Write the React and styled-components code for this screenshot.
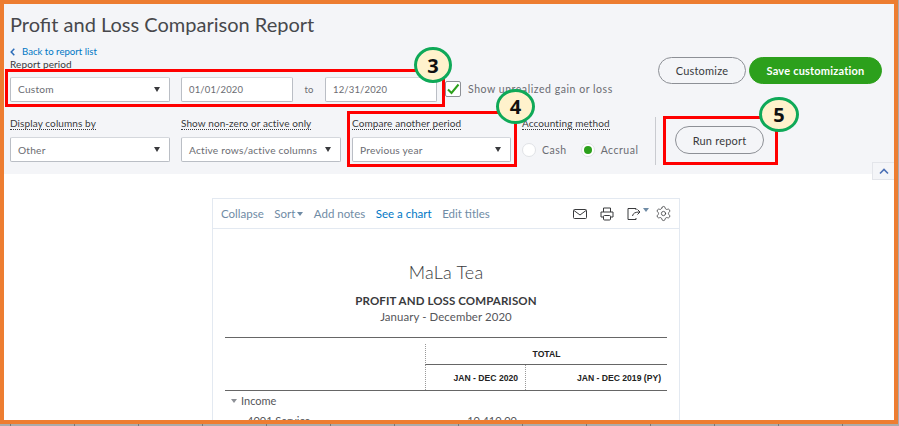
import React from "react";
import styled, { createGlobalStyle } from "styled-components";
import { Settings } from "lucide-react";

const Global = createGlobalStyle`
  html, body { margin: 0; padding: 0; background: #fff; }
  body { font-family: "Lato", "Noto Sans", sans-serif; color: #393a3d; }
  * { box-sizing: border-box; }
`;
const Backdrop = styled.div`
  width: 899px; height: 426px; overflow: hidden; position: relative;
  background: linear-gradient(90deg, #777 0 1px, #ababab 1px 64px) 10px 0 / 64px 100%;
`;
const Frame = styled.div`
  width: 898px; height: 424px; border: 4px solid #ed7d31; background: #fff; overflow: hidden; position: relative;
`;
const Header = styled.div`
  height: 170px; background: #f4f5f8; padding: 5px 0 0 6px; position: relative;
`;
const Title = styled.h1`
  margin: 0; font-size: 20px; line-height: 30px; font-weight: 400; color: #47484c;
`;
const Back = styled.div`
  margin-top: 7px; font-size: 9.6px; line-height: 12px; color: #0077c5; display: flex; align-items: center; gap: 7px;
  svg { display: block; }
`;
const Label = styled.div`
  font-size: 10px; line-height: 12px; letter-spacing: .1px; color: #393a3d; width: fit-content; border-bottom: 1px dotted #393a3d;
`;
const PeriodRow = styled.div`
  display: flex; align-items: center; margin-top: 5px; height: 26px;
`;
const Field = styled.div`
  width: ${p => p.$w}px; height: 25px; background: #fff; border: 1px solid #babec5; border-top-color: #d4d7dc;
  border-radius: 2px; display: flex; align-items: center; justify-content: space-between;
  padding: 0 7px; font-size: ${p => p.$date ? 9.5 : 10.2}px; color: #6b6c72; letter-spacing: ${p => p.$date ? ".15px" : ".2px"};
  margin-right: ${p => p.$mr || 0}px; flex: none; white-space: nowrap;
`;
const Caret = styled.i`
  width: 0; height: 0; border-left: 3.5px solid transparent; border-right: 3.5px solid transparent;
  border-top: 5px solid #393a3d; margin-right: 2px; flex: none;
`;
const To = styled.span`
  font-size: 9.5px; color: #6b6c72; width: 32px; text-align: center; flex: none;
`;
const Check = styled.div`
  display: flex; align-items: center; gap: 7px; font-size: 10.5px; letter-spacing: .55px; color: #6b6c72; margin-left: 8px; white-space: nowrap;
`;
const Box = styled.div`
  width: 16px; height: 16px; background: #fff; border: 1px solid #8d9096; border-radius: 2px;
  display: flex; align-items: center; justify-content: center;
`;
const OptionRow = styled.div`
  display: flex; margin-top: 15px;
`;
const Col = styled.div`
  width: ${p => p.$w}px; flex: none; display: flex; flex-direction: column; gap: 7px;
`;
const Radios = styled.div`
  display: flex; align-items: center; height: 25px; font-size: 10.5px; letter-spacing: .5px; color: #6b6c72; gap: 6px; white-space: nowrap;
`;
const Radio = styled.span`
  width: 14px; height: 14px; border-radius: 50%; background: #fff; border: 1px solid #e0e2e6; flex: none;
  display: flex; align-items: center; justify-content: center; margin-left: ${p => p.$ml || 0}px;
  &::after { content: ""; width: 8px; height: 8px; border-radius: 50%; background: ${p => p.$on ? "#2ca01c" : "transparent"}; }
`;
const Divider = styled.div`
  width: 1px; height: 48px; background: #c9cbd0; margin: 0 19px 0 15px; flex: none;
`;
const Pill = styled.div`
  height: ${p => p.$h}px; width: ${p => p.$w}px; border-radius: 14px; border: 1px solid #8d9096; background: transparent;
  display: flex; align-items: center; justify-content: center; font-size: 11px; letter-spacing: .2px; color: #393a3d; flex: none;
`;
const RunPill = styled(Pill)`
  margin-top: 9px;
`;
const Green = styled(Pill)`
  background: #2ca01c; border-color: #2ca01c; color: #fff; font-weight: 700; font-size: 11px;
`;
const TopActions = styled.div`
  position: absolute; right: 12px; top: 53px; display: flex; gap: 3px;
`;
const Collapse = styled.div`
  position: absolute; right: 0; top: 158px; width: 22px; height: 18px; background: #f4f5f8; border: 1px solid #e3e5ea; border-right: 0;
  display: flex; align-items: center; justify-content: center; z-index: 1;
`;
const Report = styled.div`
  width: 468px; margin: 24px 0 0 208px; border: 1px solid #e3e9f1; border-bottom: 0; height: 260px;
`;
const ReportBar = styled.div`
  height: 30px; border-bottom: 1px solid #e3e9f1; display: flex; align-items: center; padding: 0 7px 0 8px; font-size: 11.5px; color: #6f8ba5; gap: 10.500px;
`;
const BarLink = styled.span`
  color: ${p => p.$blue ? "#0077c5" : "#6f8ba5"}; display: flex; align-items: center; gap: 2px;
`;
const Icons = styled.div`
  margin-left: auto; display: flex; align-items: center; gap: 13px;
  svg { display: block; }
`;
const ShareGroup = styled.div`
  display: flex; align-items: flex-start; gap: 1px; margin-right: -7px;
`;
const SmallCaret = styled.i`
  width: 0; height: 0; border-left: 3.5px solid transparent; border-right: 3.5px solid transparent; border-top: 4px solid ${p => p.$c || "#6f8ba5"}; display: block; margin-top: ${p => p.$mt || 0}px;
`;
const Company = styled.div`
  text-align: center; font-size: 18px; font-weight: 300; color: #393a3d; margin-top: 32px; line-height: 22px; letter-spacing: .2px;
`;
const ReportName = styled.div`
  text-align: center; font-size: 11.5px; font-weight: 700; color: #393a3d; margin-top: 11px; line-height: 14px; letter-spacing: .1px;
`;
const Dates = styled.div`
  text-align: center; font-size: 11.4px; color: #55565a; line-height: 14px; margin-top: 2px; letter-spacing: .1px;
`;
const Table = styled.div`
  margin: 13px 12px 0 12px; border-top: 1px solid #666;
`;
const HeadGrid = styled.div`
  display: grid; grid-template-columns: 200px 100px 142px; grid-template-rows: 27px 25px; border-bottom: 1px solid #666;
`;
const TotalCell = styled.div`
  grid-column: 2 / 4; margin-top: 6px; border-left: 1px dotted #999; border-bottom: 1px solid #666;
  display: flex; align-items: center; justify-content: center; font-family: "Liberation Sans", Arial, sans-serif; font-size: 8.6px; font-weight: 700; color: #222;
`;
const Spacer = styled.div``;
const ColHead = styled.div`
  border-left: 1px dotted #999; display: flex; align-items: center; justify-content: flex-end; padding-right: ${p => p.$pr}px;
  font-family: "Liberation Sans", Arial, sans-serif; font-size: 8.6px; font-weight: 700; color: #222; white-space: nowrap;
`;
const Row = styled.div`
  display: grid; grid-template-columns: 200px 100px 142px; height: ${p => p.$h}px; align-items: center; font-size: 11px; color: #55565a; white-space: nowrap;
`;
const RowName = styled.div`
  display: flex; align-items: center; gap: 4px; padding-left: ${p => p.$pl}px;
`;
const Amount = styled.div`
  text-align: right; padding-right: 8px;
`;
const Overlay = styled.div`
  position: absolute; left: ${p => p.$x}px; top: ${p => p.$y}px; width: ${p => p.$w}px; height: ${p => p.$h}px;
  border: 3px solid #f00; pointer-events: none; z-index: 2;
`;
const Badge = styled.div`
  position: absolute; left: ${p => p.$x}px; top: ${p => p.$y}px; width: ${p => p.$w}px; height: ${p => p.$h}px; border-radius: 50%;
  background: #fff2cc; border: 3px solid #0fa958; display: flex; align-items: center; justify-content: center;
  font-family: "Open Sans", sans-serif; font-size: 20px; font-weight: 700; color: #111; z-index: 3;
`;

export default function App() {
  return (
    <Backdrop>
      <Global />
      <Frame>
        <Header>
          <Title>Profit and Loss Comparison Report</Title>
          <Back>
            <svg width="5" height="8" viewBox="0 0 5 8"><path d="M4.3.8 1.2 4l3.1 3.2" fill="none" stroke="#2b6cb8" strokeWidth="1.5" /></svg>
            Back to report list
          </Back>
          <Label>Report period</Label>
          <PeriodRow>
            <Field $w={160} $mr={11}>Custom<Caret /></Field>
            <Field $w={112} $date>01/01/2020</Field>
            <To>to</To>
            <Field $w={112} $date>12/31/2020</Field>
            <Check>
              <Box>
                <svg width="14" height="12" viewBox="0 0 14 12"><path d="M2 6.5 5.5 10 12.5 1.5" fill="none" stroke="#2ca01c" strokeWidth="2" /></svg>
              </Box>
              Show unrealized gain or loss
            </Check>
          </PeriodRow>
          <OptionRow>
            <Col $w={171}><Label>Display columns by</Label><Field $w={160}>Other<Caret /></Field></Col>
            <Col $w={171}><Label>Show non-zero or active only</Label><Field $w={160}>Active rows/active columns<Caret /></Field></Col>
            <Col $w={170}><Label>Compare another period</Label><Field $w={159}>Previous year<Caret /></Field></Col>
            <Col $w={118}>
              <Label>Accounting method</Label>
              <Radios><Radio />Cash<Radio $on $ml={8} />Accrual</Radios>
            </Col>
            <Divider />
            <RunPill $w={89} $h={28}>Run report</RunPill>
          </OptionRow>
          <TopActions>
            <Pill $w={88} $h={27}>Customize</Pill>
            <Green $w={133} $h={27}>Save customization</Green>
          </TopActions>
        </Header>
        <Collapse>
          <svg width="10" height="7" viewBox="0 0 10 7"><path d="M1 5.5 5 1.5l4 4" fill="none" stroke="#4a6fb5" strokeWidth="1.6" /></svg>
        </Collapse>
        <Report>
          <ReportBar>
            <BarLink>Collapse</BarLink>
            <BarLink>Sort<SmallCaret /></BarLink>
            <BarLink>Add notes</BarLink>
            <BarLink $blue>See a chart</BarLink>
            <BarLink>Edit titles</BarLink>
            <Icons>
              <svg width="14" height="10" viewBox="0 0 14 10" fill="none" stroke="#393a3d"><rect x=".5" y=".5" width="13" height="9" rx="1" /><path d="m1 1.5 6 4.5 6-4.5" /></svg>
              <svg width="14" height="14" viewBox="0 0 14 14" fill="none" stroke="#393a3d"><path d="M3.5 5V1h7v4M3.5 10H1V5h12v5h-2.5" /><rect x="3.5" y="8.5" width="7" height="4.5" rx="1" /></svg>
              <ShareGroup>
                <svg width="15" height="14" viewBox="0 0 15 14" fill="none" stroke="#393a3d"><path d="M9 3V1.5H1v11h8V11" /><path d="M5.5 9c.5-3 3-4 7-4M10.500 2.500 13 5l-2.500 2.500" /></svg>
                <SmallCaret $mt={1} />
              </ShareGroup>
              <Settings size={17} strokeWidth={1.1} color="#393a3d" />
            </Icons>
          </ReportBar>
          <Company>MaLa Tea</Company>
          <ReportName>PROFIT AND LOSS COMPARISON</ReportName>
          <Dates>January - December 2020</Dates>
          <Table>
            <HeadGrid>
              <Spacer />
              <TotalCell>TOTAL</TotalCell>
              <Spacer />
              <ColHead $pr={7}>JAN - DEC 2020</ColHead>
              <ColHead $pr={6}>JAN - DEC 2019 (PY)</ColHead>
            </HeadGrid>
            <Row $h={19}>
              <RowName $pl={6}><SmallCaret $c="#8d9096" />Income</RowName>
            </Row>
            <Row $h={20}>
              <RowName $pl={22}>4001 Service</RowName>
              <Amount>10,410.00</Amount>
            </Row>
          </Table>
        </Report>
        <Overlay $x={1} $y={65} $w={440} $h={38} />
        <Overlay $x={343} $y={107} $w={170} $h={56} />
        <Overlay $x={659} $y={112} $w={115} $h={49} />
      </Frame>
      <Badge $x={414} $y={47} $w={38} $h={36}>3</Badge>
      <Badge $x={496} $y={89} $w={39} $h={35}>4</Badge>
      <Badge $x={759} $y={97} $w={40} $h={35}>5</Badge>
    </Backdrop>
  );
}
